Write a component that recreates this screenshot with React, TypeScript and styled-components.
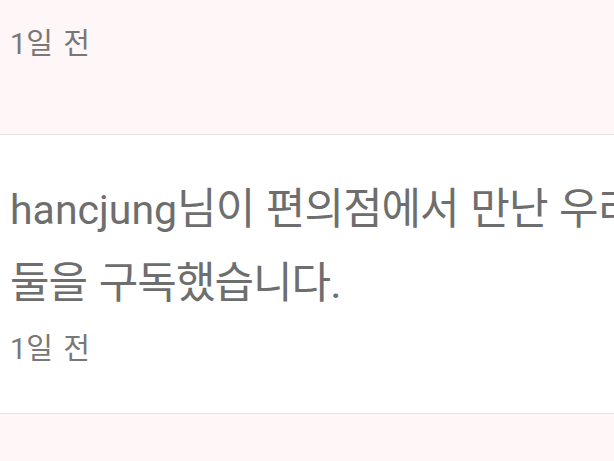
import styled, { createGlobalStyle } from 'styled-components'

const GlobalStyle = createGlobalStyle`
  html, body {
    margin: 0;
    padding: 0;
    background: #fff;
    overflow: hidden;
  }
  body {
    font-family: Roboto, 'Noto Sans CJK KR', sans-serif;
  }
`

const Screen = styled.div`
  width: 614px;
  height: 461px;
  overflow: hidden;
`

const List = styled.ul`
  list-style: none;
  margin: -170px 0 0;
  padding: 0;
  width: 650px;
`

const Item = styled.li<{ $unread?: boolean; $tall?: boolean }>`
  display: flex;
  flex-direction: column;
  gap: 9px;
  padding: 38px 10px ${(p) => (p.$tall ? '70px' : '44px')};
  background: ${(p) => (p.$unread ? '#fff7f7' : '#fff')};
  border-bottom: 1px solid #e6e2e2;
`

const Message = styled.p`
  margin: 0;
  font-size: 43px;
  line-height: 73px;
  letter-spacing: -1px;
  word-spacing: 2px;
  color: #6e6e6e;
`

const Name = styled.span`
  font-size: 41px;
  letter-spacing: 0;
`

const Time = styled.span`
  font-size: 29px;
  line-height: 40px;
  letter-spacing: 0;
  word-spacing: 3px;
  color: #787878;
`

interface Notice {
  user: string
  text: string
  time: string
  unread: boolean
}

const notices: Notice[] = [
  { user: 'hancjung', text: '님이 편의점에서 만난 우리 둘을 구독했습니다.', time: '1일 전', unread: true },
  { user: 'hancjung', text: '님이 편의점에서 만난 우리 둘을 구독했습니다.', time: '1일 전', unread: false },
  { user: 'hancjung', text: '님이 편의점에서 만난 우리 둘을 구독했습니다.', time: '2일 전', unread: true }
]

export default function App() {
  return (
    <Screen>
      <GlobalStyle />
      <List>
        {notices.map((n, i) => (
          <Item key={i} $unread={n.unread} $tall={i === 0}>
            <Message>
              <Name>{n.user}</Name>
              {n.text}
            </Message>
            <Time>{n.time}</Time>
          </Item>
        ))}
      </List>
    </Screen>
  )
}
